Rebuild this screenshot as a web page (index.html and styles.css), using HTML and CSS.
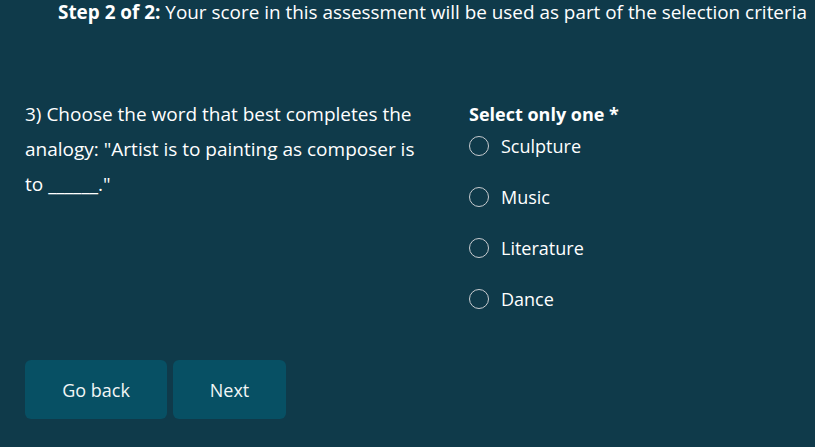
FILE: index.html
```html
<!DOCTYPE html>
<html>
<head>
<meta charset="utf-8">
<link rel="stylesheet" href="styles.css">
</head>
<body>
<div class="page">
  <p class="step"><b>Step 2 of 2:</b> Your score in this assessment will be used as part of the selection criteria</p>
  <div class="question">
    <p class="prompt">3) Choose the word that best completes the analogy: "Artist is to painting as composer is to ______."</p>
    <div class="options">
      <div class="legend">Select only one *</div>
      <label class="opt"><span class="radio"></span>Sculpture</label>
      <label class="opt"><span class="radio"></span>Music</label>
      <label class="opt"><span class="radio"></span>Literature</label>
      <label class="opt"><span class="radio"></span>Dance</label>
    </div>
  </div>
  <div class="actions">
    <button class="btn back">Go back</button>
    <button class="btn next">Next</button>
  </div>
</div>
</body>
</html>
```
FILE: styles.css
```css
html, body {
  margin: 0;
  height: 100%;
  background: #0f3a4a;
}
body {
  font-family: "Open Sans", "Noto Sans", sans-serif;
  color: #ffffff;
  font-size: 18px;
}
.page {
  padding: 0 25px;
}
.step {
  margin: 0;
  padding: 0 0 0 33px;
  font-size: 18.9px;
  line-height: 24px;
  white-space: nowrap;
}
.question {
  display: flex;
  margin-top: 73px;
}
.prompt {
  width: 410px;
  margin: 0 34px 0 0;
  font-size: 19px;
  line-height: 35px;
}
.options {
  display: flex;
  flex-direction: column;
}
.legend {
  font-weight: bold;
  line-height: 35px;
  margin-bottom: 4px;
}
.opt {
  display: flex;
  align-items: center;
  gap: 12px;
  height: 20px;
  margin-bottom: 31px;
}
.radio {
  width: 18px;
  height: 18px;
  border: 1px solid #c8ccd0;
  border-radius: 50%;
}
.actions {
  display: flex;
  gap: 6px;
  margin-top: 20px;
}
.btn {
  height: 59px;
  border: none;
  border-radius: 6px;
  background: #075064;
  color: #f2f6f6;
  font-family: inherit;
  font-size: 18px;
}
.back { width: 142px; }
.next { width: 113px; }
```
